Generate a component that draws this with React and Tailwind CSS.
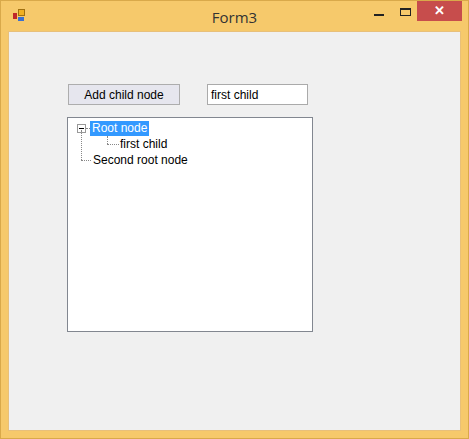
export default function App() {
  const f = { fontFamily: '"Liberation Sans", Arial, sans-serif' };
  return (
    <div className="w-[469px] h-[439px] bg-[#f6c96b] flex flex-col border border-[#d9a94a]" style={f}>
      <div className="h-[30px] flex items-start relative shrink-0">
        <div className="absolute left-[12px] top-[8px] w-[14px] h-[14px]">
          <div className="absolute left-0 top-[4px] w-[4px] h-[6px] bg-[#c0282a]" />
          <div className="absolute left-[5px] top-0 w-[7px] h-[7px] bg-[#f0b020] border border-[#a07010]" />
          <div className="absolute left-[5px] top-[8px] w-[6px] h-[4px] bg-[#3a70d0]" />
        </div>
        <div className="flex-1 text-center text-[15px] text-[#333] pt-[5px]" style={{ fontFamily: '"Open Sans", sans-serif' }}>Form3</div>
        <div className="absolute left-[373px] top-[13px] w-[10px] h-[2px] bg-[#222]" />
        <div className="absolute left-[399px] top-[7px] w-[11px] h-[8px] border border-[#222] border-t-2" />
        <div className="absolute left-[416px] top-0 w-[45px] h-[20px] bg-[#c74d4c] flex items-center justify-center text-white text-[13px] font-bold">✕</div>
      </div>
      <div className="mx-[7px] mb-[7px] flex-1 bg-[#f0f0f0] border border-[#e8c07a] pl-[59px] pt-[52px]">
        <div className="flex items-center">
          <div className="w-[112px] h-[21px] bg-[#e6e6ee] border border-[#adadad] text-[12px] flex items-center justify-center text-black">Add child node</div>
          <div className="ml-[27px] w-[101px] h-[21px] bg-white border border-[#aaa] text-[12px] flex items-center pl-[3px] text-black">first child</div>
        </div>
        <div className="mt-[12px] -ml-[1px] w-[246px] h-[215px] bg-white border border-[#828790] pl-[9px] pt-[2px] text-[12px] text-black relative">
          <div className="flex items-center h-[16px]">
            <div className="w-[9px] h-[9px] border border-[#999] flex items-center justify-center text-[9px] leading-none bg-white">
              <div className="w-[5px] h-[1px] bg-black" />
            </div>
            <div className="w-[4px] border-t border-dotted border-[#888]" />
            <div className="bg-[#3399ff] text-white px-[2px] h-[15px] flex items-center">Root node</div>
          </div>
          <div className="flex items-center h-[16px] pl-[25px] relative">
            <div className="absolute left-[30px] top-0 h-[8px] border-l border-dotted border-[#888]" />
            <div className="w-[12px] border-t border-dotted border-[#888] ml-[5px]" />
            <span className="pl-[1px]">first child</span>
          </div>
          <div className="flex items-center h-[16px] relative">
            <div className="absolute left-[4px] -top-[22px] h-[30px] border-l border-dotted border-[#888]" />
            <div className="w-[10px] border-t border-dotted border-[#888] ml-[4px]" />
            <span className="pl-[2px]">Second root node</span>
          </div>
        </div>
      </div>
    </div>
  );
}
